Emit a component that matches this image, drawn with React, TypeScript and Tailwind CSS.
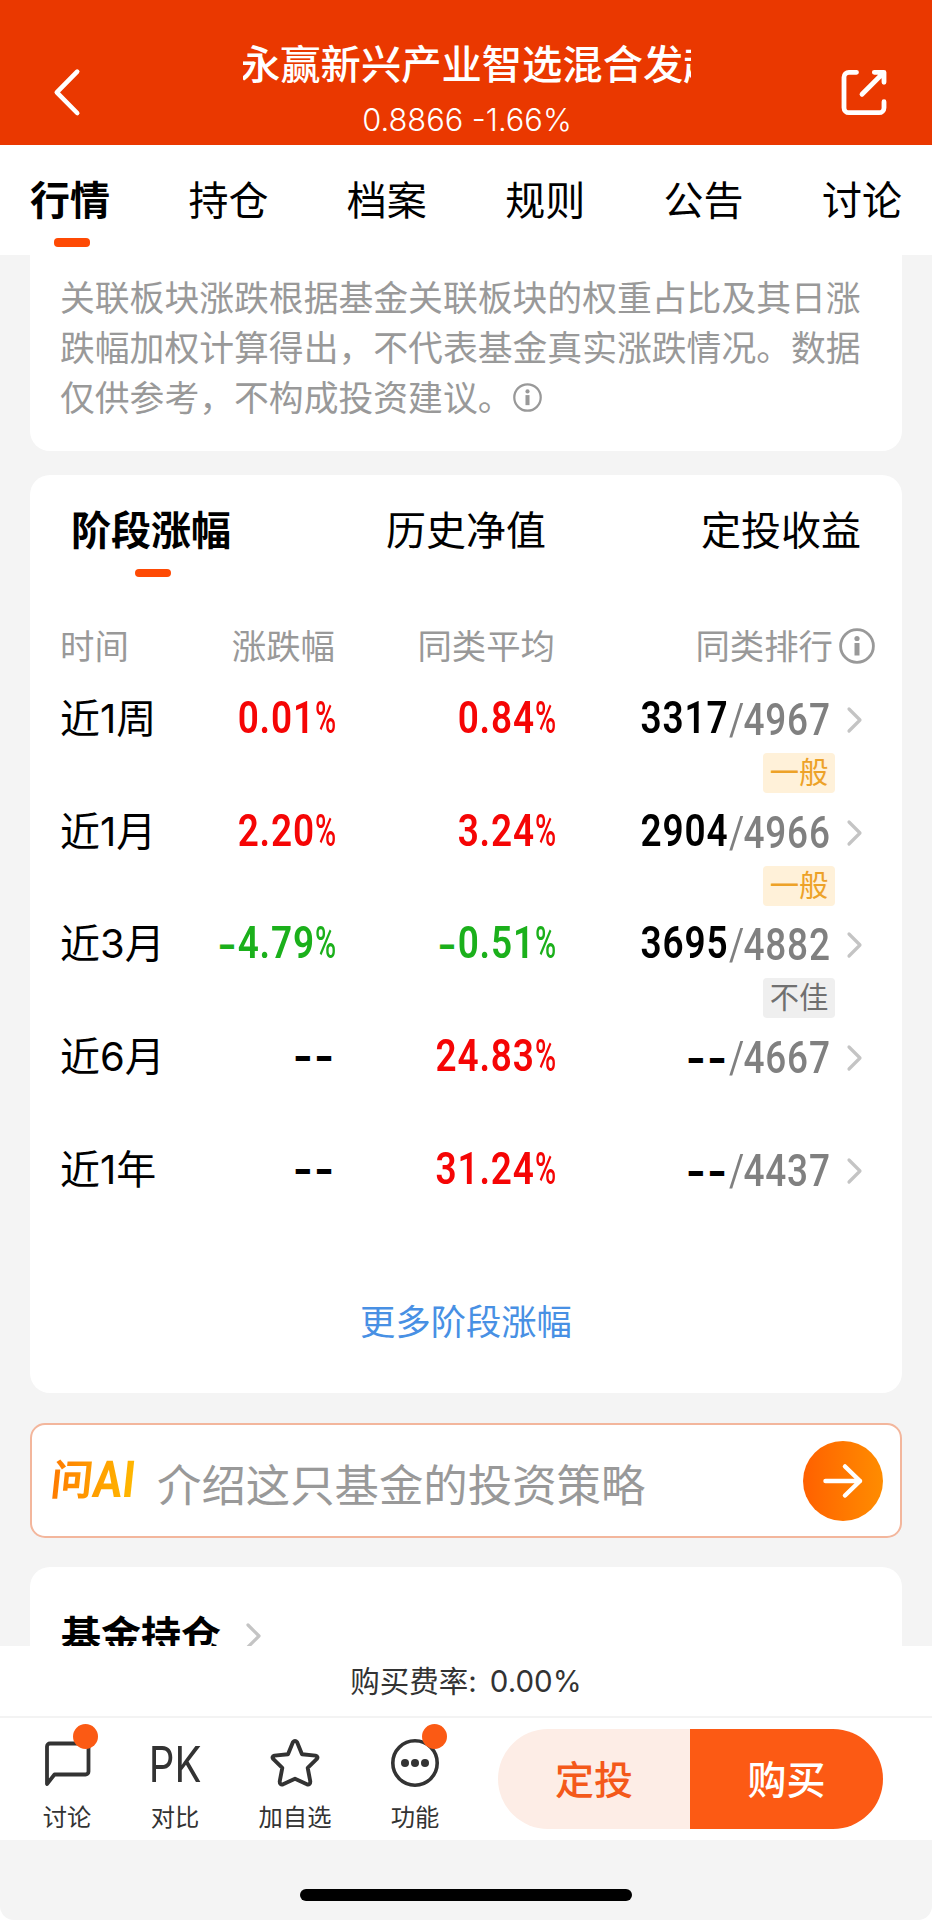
import React from "react";

const RED = "text-[#f50505]";
const GREEN = "text-[#1bb01b]";

type Row = {
  label: string;
  own: string;
  avg: string;
  rank: string;
  total: string;
  badge?: string;
};

const rows: Row[] = [
  { label: "近1周", own: "0.01", avg: "0.84", rank: "3317", total: "4967", badge: "一般" },
  { label: "近1月", own: "2.20", avg: "3.24", rank: "2904", total: "4966", badge: "一般" },
  { label: "近3月", own: "-4.79", avg: "-0.51", rank: "3695", total: "4882", badge: "不佳" },
  { label: "近6月", own: "--", avg: "24.83", rank: "--", total: "4667" },
  { label: "近1年", own: "--", avg: "31.24", rank: "--", total: "4437" },
];

function Dashes() {
  return (
    <span className="font-['Inter',sans-serif] text-[43px] font-bold leading-[48px] tracking-[1px]">--</span>
  );
}

function Figure({ value }: { value: string }) {
  return (
    <span className="inline-block origin-right scale-x-[0.85] font-['Roboto',sans-serif] text-[43.500px] font-semibold tracking-[1px]">
      {value}
    </span>
  );
}

function Percent({ value }: { value: string }) {
  if (value === "--") {
    return (
      <div className="flex justify-end leading-[50px] text-black">
        <Dashes />
      </div>
    );
  }
  const negative = value.startsWith("-");
  return (
    <div className={`flex justify-end whitespace-nowrap pt-[1px] leading-[50px] ${negative ? GREEN : RED}`}>
      {negative && (
        <span className="-mr-[13px] inline-block font-['Inter',sans-serif] text-[43px] font-semibold">-</span>
      )}
      <Figure value={negative ? value.slice(1) : value} />
      <span className="w-[20px]">
        <span className="inline-block origin-left scale-x-[0.66] font-['Roboto',sans-serif] text-[43.500px] font-medium">
          %
        </span>
      </span>
    </div>
  );
}

function Chevron() {
  return (
    <svg className="h-[28px] w-[18px]" viewBox="0 0 18 28" fill="none" stroke="#c4c4c4" strokeWidth="3.200">
      <path d="M3 3l11 11L3 25" strokeLinecap="round" strokeLinejoin="round" />
    </svg>
  );
}

function Info({ className }: { className: string }) {
  return (
    <svg className={className} viewBox="0 0 36 36" fill="none" stroke="#999" strokeWidth="2.8">
      <circle cx="18" cy="18" r="16.4" />
      <circle cx="18" cy="10.5" r="2.6" fill="#999" stroke="none" />
      <path d="M18 15v12.500" strokeWidth="5" />
    </svg>
  );
}

function Header() {
  return (
    <header className="flex h-[145px] items-start justify-between bg-[#ea3800] pl-[52px] pr-[42px] text-white">
      <svg className="mt-[66px] h-[52px] w-[30px]" viewBox="0 0 30 52" fill="none" stroke="#fff" strokeWidth="4.600">
        <path d="M25.200 5.600L4.800 26.300L25.200 47" strokeLinecap="round" strokeLinejoin="round" />
      </svg>
      <div className="ml-[12px] flex w-[448px] flex-col items-center pt-[40px]">
        <div className="w-full overflow-hidden whitespace-nowrap text-[40.300px] font-medium leading-[50px]">
          <span className="-ml-[3px]">永赢新兴产业智选混合发起</span>
        </div>
        <div className="mt-[12px] text-[30.800px] font-light leading-[36px]">0.8866 -1.66%</div>
      </div>
      <svg className="mt-[67px] h-[50px] w-[50px]" viewBox="0 0 50 50" fill="none" stroke="#fff" strokeWidth="4.800">
        <path
          d="M16.500 5.300H9a5 5 0 0 0-5 5v30.400a5 5 0 0 0 5 5h30a5 5 0 0 0 5-5v-6M34.300 5.300H44v10M43.500 5.800L22 27.300"
          strokeLinecap="round"
          strokeLinejoin="round"
        />
      </svg>
    </header>
  );
}

function NavTabs() {
  const tabs = ["行情", "持仓", "档案", "规则", "公告", "讨论"];
  return (
    <nav className="flex h-[110px] justify-between bg-white px-[30px] pt-[31px]">
      {tabs.map((t, i) => (
        <div key={t} className="flex flex-col items-center">
          <span className={`text-[40px] leading-[50px] ${i === 0 ? "font-bold" : ""}`}>{t}</span>
          {i === 0 && <span className="ml-[4px] mt-[12px] h-[9px] w-[36px] rounded-[4px] bg-[#fe4a04]" />}
        </div>
      ))}
    </nav>
  );
}

function Performance() {
  return (
    <section className="mt-[24px] h-[918px] rounded-[20px] bg-white">
      <div className="flex justify-between pl-[41px] pr-[41px] pt-[31px]">
        {["阶段涨幅", "历史净值", "定投收益"].map((t, i) => (
          <div key={t} className="flex flex-col items-center">
            <span className={`text-[40px] leading-[50px] ${i === 0 ? "font-bold" : ""}`}>{t}</span>
            {i === 0 && <span className="ml-[3px] mt-[13px] h-[8px] w-[36px] rounded-[4px] bg-[#fe4a04]" />}
          </div>
        ))}
      </div>
      <div className="mt-[50px] grid h-[40px] grid-cols-[120px_155px_220px_320px] pl-[30px] text-[34.400px] leading-[40px] text-[#999]">
        <span>时间</span>
        <span className="text-right">涨跌幅</span>
        <span className="text-right">同类平均</span>
        <span className="flex items-center justify-end gap-[6px]">
          同类排行
          <Info className="-mt-[2px] h-[36px] w-[36px]" />
        </span>
      </div>
      <div className="pt-[26px]">
        {rows.map((r) => (
          <div
            key={r.label}
            className="grid h-[112.700px] grid-cols-[120px_155px_220px_309px] pl-[30px] text-[40px] leading-[50px]"
          >
            <span className="whitespace-nowrap pt-[1px]">{r.label}</span>
            <Percent value={r.own} />
            <Percent value={r.avg} />
            <div>
              <div className="-mt-[1px] flex items-center justify-end">
                {r.rank === "--" ? <Dashes /> : <Figure value={r.rank} />}
                <div className="flex w-[103px] justify-end pt-[4px] text-[#808080]">
                  <span className="inline-block origin-right scale-x-[0.85] whitespace-nowrap font-['Roboto',sans-serif] text-[43.500px] font-medium tracking-[1px]">
                    <span className="font-normal tracking-[-1px]">/</span>
                    {r.total}
                  </span>
                </div>
                <span className="ml-[15px] flex pt-[2px]">
                  <Chevron />
                </span>
              </div>
              {r.badge && (
                <div className="flex justify-end pr-[29px] pt-[7px]">
                  <span
                    className={`flex h-[40px] w-[72px] items-center justify-center rounded-[4px] text-[29.300px] leading-[40px] ${
                      r.badge === "一般" ? "bg-[#fff1d9] text-[#eda228]" : "bg-[#efefef] text-[#707070]"
                    }`}
                  >
                    {r.badge}
                  </span>
                </div>
              )}
            </div>
          </div>
        ))}
      </div>
      <div className="mt-[42px] text-center text-[35.300px] leading-[50px] text-[#4890e4]">更多阶段涨幅</div>
    </section>
  );
}

function AskAI() {
  return (
    <section className="mt-[30px] flex h-[115px] items-center rounded-[15px] border-2 border-[#f3b69c] bg-white pl-[19px] pr-[17px]">
      <span className="-mt-[2px] flex w-[88px] -skew-x-6 items-center whitespace-nowrap font-bold leading-[50px]">
        <span className="bg-gradient-to-r from-[#ff7a00] to-[#ff9c00] bg-clip-text text-[42px] text-transparent">问</span>
        <span className="origin-left scale-x-[0.86] bg-gradient-to-r from-[#ff9c00] to-[#ffb800] bg-clip-text font-['Roboto',sans-serif] text-[51px] text-transparent">
          AI
        </span>
      </span>
      <span className="ml-[18px] mt-[11px] flex-1 text-[44.400px] leading-[54px] text-[#999]">
        介绍这只基金的投资策略
      </span>
      <span className="flex h-[80px] w-[80px] items-center justify-center rounded-full bg-gradient-to-r from-[#ff6000] to-[#ff8c00]">
        <svg className="h-[40px] w-[44px]" viewBox="0 0 44 40" fill="none" stroke="#fff" strokeWidth="4.500">
          <path d="M4.500 20h34.500M24 5.500L39 20L24 34.500" strokeLinecap="round" strokeLinejoin="round" />
        </svg>
      </span>
    </section>
  );
}

function Action({ label, width, dot, children }: { label: string; width: string; dot?: string; children: React.ReactNode }) {
  return (
    <div className={`relative flex flex-col items-center ${width}`}>
      <div className="flex h-[54px] items-center justify-center">{children}</div>
      <span className="mt-[12px] whitespace-nowrap text-[24.300px] leading-[30px]">{label}</span>
      {dot && <span className={`absolute -top-[12px] h-[25px] w-[25px] rounded-full bg-[#fb5a14] ${dot}`} />}
    </div>
  );
}

function Footer() {
  return (
    <footer className="text-[#333]">
      <div className="flex h-[70px] justify-center bg-white pt-[15px] text-[29.500px] leading-[40px]">
        <span>购买费率:</span>
        <span className="ml-[13px]">0.00%</span>
      </div>
      <div className="flex h-[124px] border-t-2 border-[#f3f3f3] bg-white pl-[27px] pt-[11px]">
        <div className="flex pt-[7px]">
          <Action label="讨论" width="w-[80px]" dot="left-[46px]">
            <svg className="h-[50px] w-[50px]" viewBox="0 0 50 50" fill="none" stroke="#333" strokeWidth="3.800">
              <path d="M5 46V8.500a3 3 0 0 1 3-3h35.500a3 3 0 0 1 3 3v25a3 3 0 0 1-3 3H12.500L5 46z" strokeLinejoin="round" />
            </svg>
          </Action>
          <Action label="对比" width="w-[136px]">
            <span className="mt-[4px] scale-x-[0.82] text-[49px] leading-[54px]">PK</span>
          </Action>
          <Action label="加自选" width="w-[104px]">
            <svg className="h-[52px] w-[52px]" viewBox="0 0 52 52" fill="none" stroke="#333" strokeWidth="3.900">
              <path
                d="M23.900 5.200Q26 2.500 28.100 5.200L33 17.200L46.500 18.600Q49.800 19.600 47.600 22.200L38.700 30.800L41.300 44.500Q41.300 48.200 37.900 47.300L26 41.700L14.100 47.300Q10.700 48.200 10.700 44.500L13.300 30.800L4.400 22.200Q2.200 19.600 5.500 18.600L19 17.200Z"
                strokeLinejoin="round"
              />
            </svg>
          </Action>
          <Action label="功能" width="w-[136px]" dot="left-[75px]">
            <svg className="h-[50px] w-[50px]" viewBox="0 0 50 50" fill="none" stroke="#333" strokeWidth="3.600">
              <circle cx="25" cy="25" r="22.200" />
              <g fill="#333" stroke="none">
                <circle cx="15" cy="25" r="4" />
                <circle cx="25" cy="25" r="4" />
                <circle cx="35" cy="25" r="4" />
              </g>
            </svg>
          </Action>
        </div>
        <div className="ml-[15px] flex h-[100px] w-[385px] overflow-hidden rounded-full text-[39px] font-medium leading-[101px]">
          <span className="w-[192px] bg-[#fdede6] text-center text-[#f4591a]">定投</span>
          <span className="flex-1 bg-[#fc5a14] text-center text-white">购买</span>
        </div>
      </div>
      <div className="bg-white">
        <div className="flex h-[80px] justify-center rounded-b-[14px] bg-[#f4f4f4] pt-[49px]">
          <span className="h-[12px] w-[332px] rounded-full bg-black" />
        </div>
      </div>
    </footer>
  );
}

export default function App() {
  return (
    <div
      lang="zh-CN"
      className="flex h-[1921px] w-[932px] flex-col overflow-hidden bg-white font-['Inter','Noto_Sans_CJK_SC',sans-serif] text-black"
    >
      <Header />
      <NavTabs />
      <main className="h-[1391px] overflow-hidden bg-[#f4f4f4] px-[30px]">
        <section className="h-[196px] rounded-b-[20px] bg-white px-[30px] pt-[18px] text-[34.820px] leading-[50px] text-[#999]">
          <div className="whitespace-nowrap">关联板块涨跌根据基金关联板块的权重占比及其日涨</div>
          <div className="whitespace-nowrap">跌幅加权计算得出，不代表基金真实涨跌情况。数据</div>
          <div className="flex items-center whitespace-nowrap">
            仅供参考，不构成投资建议。
            <Info className="-mt-[2px] h-[29px] w-[29px]" />
          </div>
        </section>
        <Performance />
        <AskAI />
        <section className="mt-[29px] flex h-[200px] items-start rounded-t-[20px] bg-white pl-[31px] pt-[44px]">
          <span className="text-[40px] font-bold leading-[50px]">基金持仓</span>
          <span className="ml-[24px] mt-[11px]">
            <Chevron />
          </span>
        </section>
      </main>
      <Footer />
    </div>
  );
}
